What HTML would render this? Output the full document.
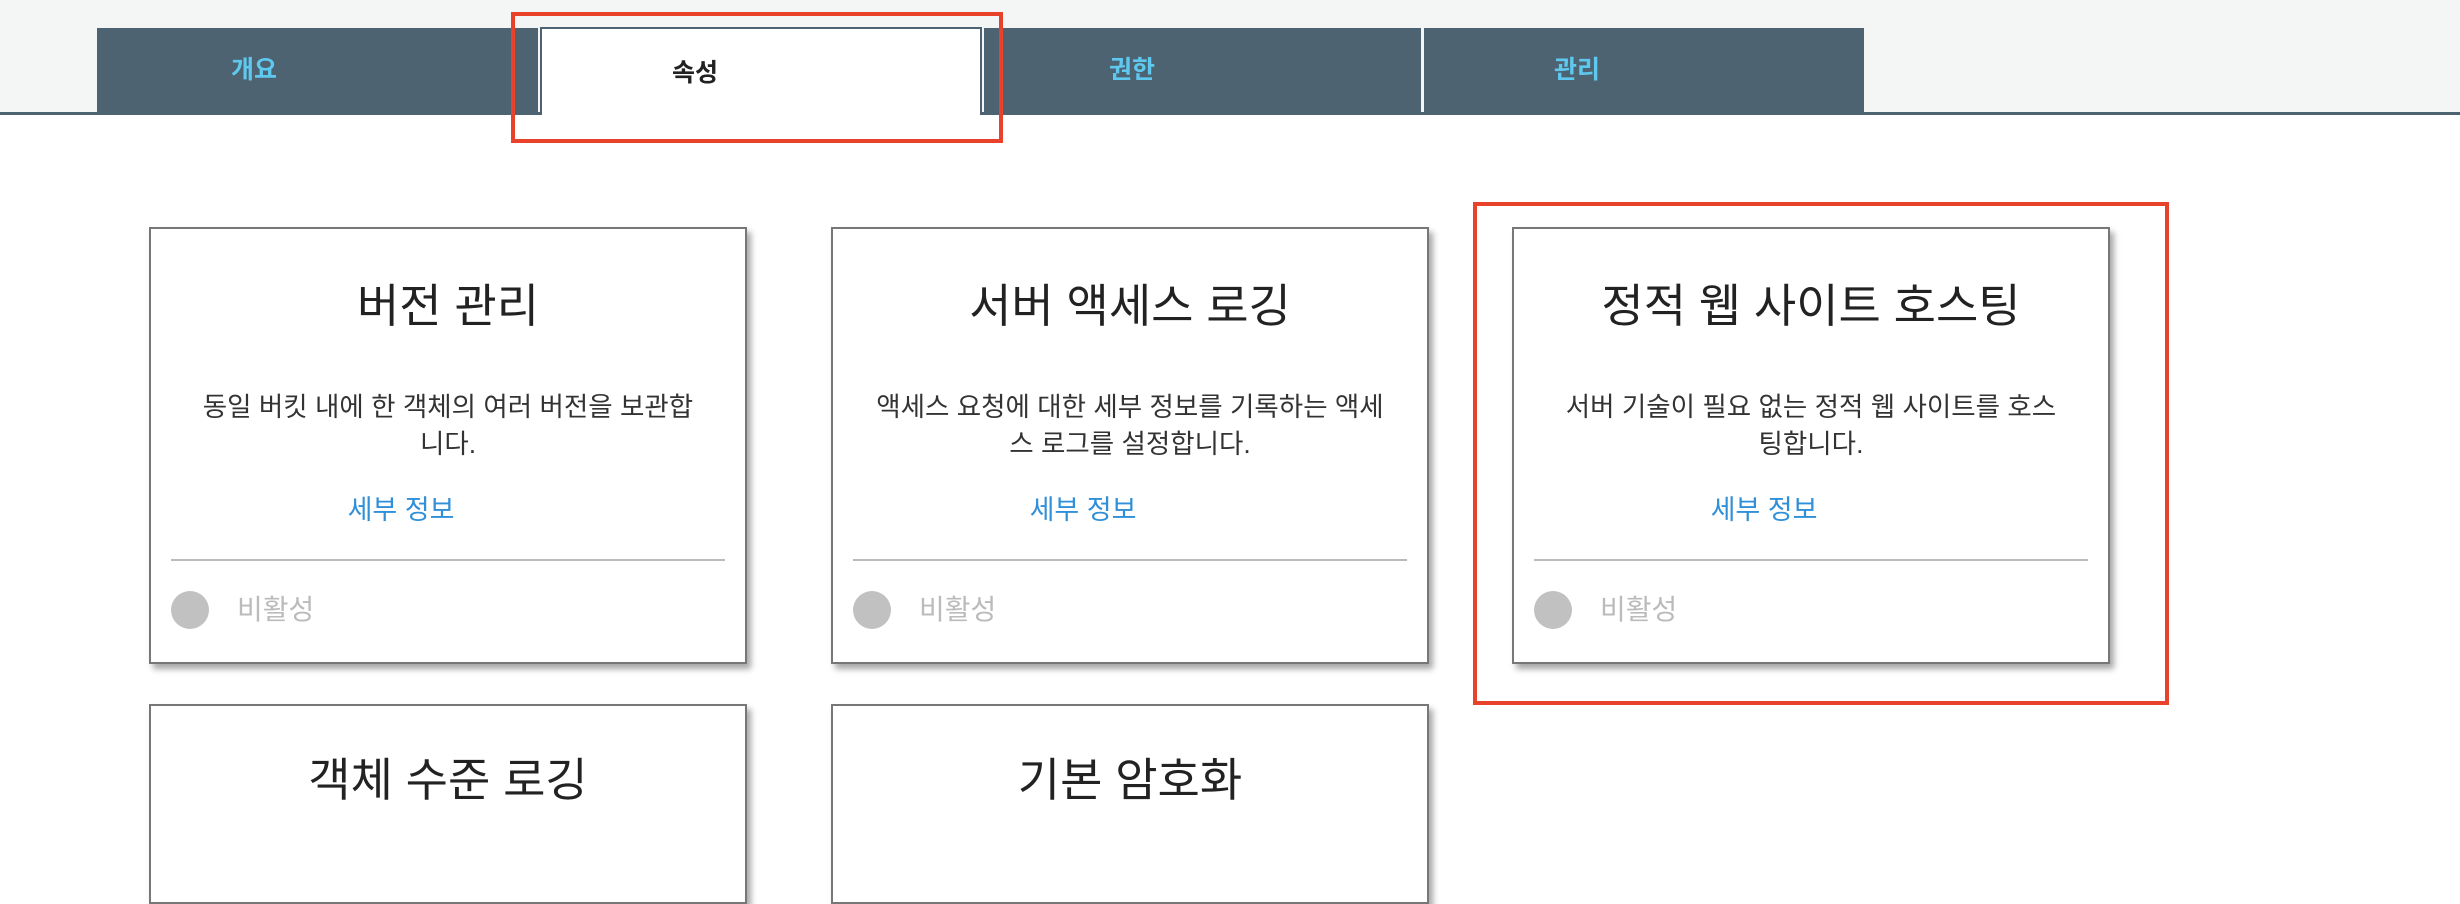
<!DOCTYPE html>
<html><head><meta charset="utf-8"><style>
body{margin:0;width:2460px;height:846px;overflow:hidden;background:#fff;font-family:"Liberation Sans","Noto Sans CJK KR",sans-serif;position:relative}
.top{position:absolute;left:0;top:0;width:2460px;height:113px;background:#f4f6f6}
.line{position:absolute;left:0;top:112px;width:2460px;height:3px;background:#4d6371}
.tab{position:absolute;top:28px;height:84px;background:#4d6371;color:#5fc8ef;font-weight:bold;font-size:25px;line-height:84px;box-sizing:border-box}
.tab.act{background:#fff;color:#222;border:2px solid #4d6371;border-bottom:none;height:88px;line-height:88px;top:27px}
.card{position:absolute;width:598px;background:#fff;border:2px solid #777;box-sizing:border-box;box-shadow:4px 5px 6px rgba(0,0,0,.35);text-align:center;overflow:hidden}
.card h2{margin:0;font-weight:normal;font-size:46px;color:#222;position:absolute;top:41px;width:100%}
.desc{position:absolute;left:0;width:100%;font-size:26.5px;line-height:37px;color:#333;white-space:nowrap}
.link{position:absolute;top:259px;left:-47px;width:100%;font-size:27px;color:#2f8fd8}
.hr{position:absolute;left:20px;right:20px;top:330px;height:2px;background:#bbb}
.circ{position:absolute;left:20px;top:362px;width:38px;height:38px;border-radius:50%;background:#c0c1c0}
.off{position:absolute;left:86px;top:362px;font-size:28px;color:#bbb;line-height:38px}
.red{position:absolute;border:4px solid #e8432a;box-sizing:border-box}
</style></head><body>
<div class="top"></div>
<div class="line"></div>
<div class="tab" style="left:97px;width:441px;padding-left:134px">개요</div>
<div class="tab act" style="left:540px;width:442px;padding-left:130px">속성</div>
<div class="tab" style="left:984px;width:437px;padding-left:125px">권한</div>
<div class="tab" style="left:1424px;width:440px;padding-left:130px">관리</div>

<div class="card" style="left:149px;top:227px;height:437px">
<h2>버전 관리</h2>
<div class="desc" style="top:160px">동일 버킷 내에 한 객체의 여러 버전을 보관합<br>니다.</div>
<div class="link">세부 정보</div>
<div class="hr"></div><div class="circ"></div><div class="off">비활성</div></div>

<div class="card" style="left:831px;top:227px;height:437px">
<h2>서버 액세스 로깅</h2>
<div class="desc" style="top:160px">액세스 요청에 대한 세부 정보를 기록하는 액세<br>스 로그를 설정합니다.</div>
<div class="link">세부 정보</div>
<div class="hr"></div><div class="circ"></div><div class="off">비활성</div></div>

<div class="card" style="left:1512px;top:227px;height:437px">
<h2>정적 웹 사이트 호스팅</h2>
<div class="desc" style="top:160px">서버 기술이 필요 없는 정적 웹 사이트를 호스<br>팅합니다.</div>
<div class="link">세부 정보</div>
<div class="hr"></div><div class="circ"></div><div class="off">비활성</div></div>

<div class="card" style="left:149px;top:704px;height:200px"><h2 style="top:38px">객체 수준 로깅</h2></div>
<div class="card" style="left:831px;top:704px;height:200px"><h2 style="top:38px">기본 암호화</h2></div>

<div class="red" style="left:511px;top:12px;width:492px;height:131px"></div>
<div class="red" style="left:1473px;top:202px;width:696px;height:503px"></div>
</body></html>
